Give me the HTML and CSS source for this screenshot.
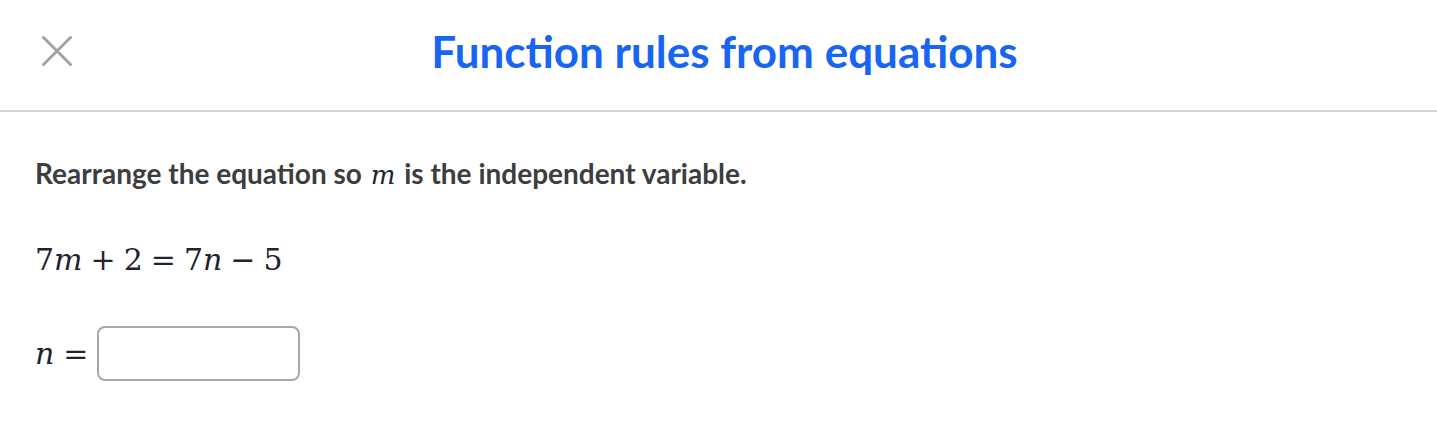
FILE: index.html
```html
<!DOCTYPE html>
<html>
<head>
<meta charset="utf-8">
<link rel="stylesheet" href="styles.css">
</head>
<body>
<header class="header">
  <button class="close" aria-label="Close">
    <svg width="30" height="30" viewBox="0 0 30 30"><path d="M1.5 1.5L28.5 28.5M28.5 1.5L1.5 28.5" stroke="#a3a3a3" stroke-width="3" stroke-linecap="round" fill="none"/></svg>
  </button>
  <h1 class="title">Function rules from equations</h1>
  <div class="spacer"></div>
</header>
<main class="content">
  <p class="question">Rearrange the equation so <span class="mv">m</span> is the independent variable.</p>
  <div class="equation math"><span class="mn">7</span><span class="mv">m</span><span class="bin">+</span><span class="mn">2</span><span class="rel">=</span><span class="mn">7</span><span class="mv">n</span><span class="bin">−</span><span class="mn">5</span></div>
  <div class="answer math"><span class="mv">n</span><span class="rel answer-eq">=</span><input class="box" type="text"></div>
</main>
</body>
</html>
```
FILE: styles.css
```css
html, body { margin: 0; padding: 0; background: #fff; }
body { font-family: Lato, "Noto Sans", sans-serif; }
.header {
  display: flex;
  align-items: center;
  height: 110px;
  border-bottom: 2px solid #d6d6d6;
}
.close {
  width: 112px;
  height: 100px;
  background: none;
  border: none;
  padding: 0 0 0 42px;
  display: flex;
  align-items: center;
  justify-content: flex-start;
  margin-top: -8px;
}
.spacer { width: 100px; }
.title {
  flex: 1;
  text-align: center;
  margin: -8px 0 0;
  font-size: 44px;
  font-weight: 700;
  color: #1865f2;
}
.content { padding: 0 35px; }
.question {
  margin: 44px 0 0;
  font-size: 28px;
  font-weight: 700;
  color: #3b3e40;
}
.math {
  font-family: "DejaVu Serif", "Liberation Serif", serif;
  font-weight: 400;
  color: #21242c;
}
.mv { font-family: "DejaVu Serif", serif; font-style: italic; font-weight: 400; }
.question .mv { font-size: 26px; margin: 0 2px; color: #21242c; }
.equation {
  margin-top: 52px;
  font-size: 30px;
  display: flex;
  align-items: baseline;
}
.bin { margin: 0 8px; }
.rel { margin: 0 8px; }
.answer-eq { margin: 0 9px; }
.answer {
  margin-top: 49px;
  display: flex;
  align-items: center;
  font-size: 30px;
}
.box {
  width: 203px;
  height: 55px;
  box-sizing: border-box;
  border: 2px solid #a8a8a8;
  border-radius: 8px;
  background: #fff;
}
```
